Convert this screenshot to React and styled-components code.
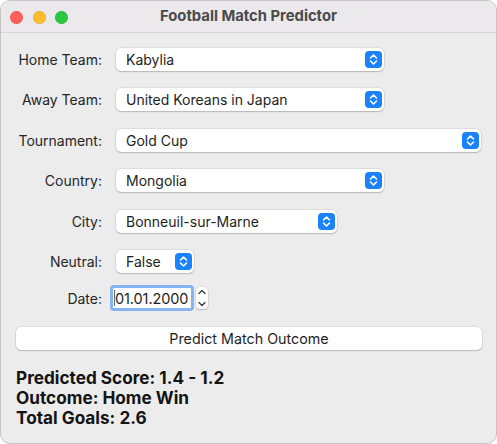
import React from "react";
import styled, { createGlobalStyle } from "styled-components";

const GlobalStyle = createGlobalStyle`
  html, body { margin: 0; padding: 0; background: #ffffff; }
  body { font-family: Inter, "Liberation Sans", "Noto Sans", sans-serif; -webkit-font-smoothing: antialiased; }
  * { box-sizing: border-box; }
`;

const Window = styled.div`
  width: 497px;
  height: 444px;
  border: 1px solid #c4c4c4;
  border-radius: 10px;
  overflow: hidden;
  background: #ececec;
  display: flex;
  flex-direction: column;
`;

const TitleBar = styled.div`
  height: 32px;
  flex: none;
  background: #ebe9eb;
  border-bottom: 1px solid #d6d6d6;
  display: grid;
  grid-template-columns: 1fr auto 1fr;
  align-items: center;
`;

const Lights = styled.div`
  display: flex;
  gap: 9.5px;
  padding-left: 9px;
  padding-top: 1px;
`;

const Light = styled.span`
  width: 13px;
  height: 13px;
  border-radius: 50%;
  background: ${(p) => p.$color};
  box-shadow: inset 0 0 0 0.5px rgba(0, 0, 0, 0.12);
`;

const Title = styled.div`
  font-size: 14.8px;
  font-weight: 700;
  color: #4a4a4a;
  margin-top: -2px;
`;

const Body = styled.div`
  padding: 15px 15px 0 14px;
  display: flex;
  flex-direction: column;
`;

const Form = styled.div`
  display: grid;
  grid-template-columns: 87px 1fr;
  column-gap: 14px;
  row-gap: 17.4px;
  align-items: center;
`;

const Label = styled.div`
  font-size: 14px;
  color: #262626;
  text-align: right;
  white-space: nowrap;
  margin-top: ${(p) => (p.$shift ? `${p.$shift}px` : "0")};
`;

const Popup = styled.div`
  height: 23px;
  width: ${(p) => (p.$width ? `${p.$width}px` : "100%")};
  background: #ffffff;
  border-radius: 5px;
  box-shadow: 0 0 0 0.5px rgba(0, 0, 0, 0.12), 0 1px 1.5px rgba(0, 0, 0, 0.18);
  display: flex;
  align-items: center;
  justify-content: space-between;
  padding: 0 2px 0 10px;
  font-size: 14px;
  color: #1e1e1e;
`;

const Indicator = styled.span`
  width: 17px;
  height: 17px;
  border-radius: 4px;
  background: #1a82fb;
  display: flex;
  align-items: center;
  justify-content: center;
`;

const DateWrap = styled.div`
  display: flex;
  align-items: center;
  gap: 2px;
  margin-left: -6px;
  margin-top: -5px;
`;

const DateField = styled.div`
  width: 84px;
  height: 26px;
  border: 3px solid #86b3f1;
  border-radius: 4px;
  background: #ffffff;
  display: flex;
  align-items: center;
  padding-left: 1px;
  font-size: 14.5px;
  letter-spacing: -0.1px;
  color: #1e1e1e;
  white-space: nowrap;
  overflow: hidden;
`;

const Caret = styled.span`
  flex: none;
  width: 1px;
  height: 16px;
  background: #6a6a6a;
`;

const Stepper = styled.div`
  width: 12px;
  height: 22px;
  background: #ffffff;
  border-radius: 4px;
  box-shadow: 0 0 0 0.5px rgba(0, 0, 0, 0.12), 0 1px 1.5px rgba(0, 0, 0, 0.18);
  display: flex;
  flex-direction: column;
  align-items: center;
  justify-content: space-between;
  padding: 2px 0;
`;

const Button = styled.div`
  margin-top: 16px;
  height: 23px;
  width: 466px;
  margin-left: 1px;
  background: #ffffff;
  border-radius: 5px;
  box-shadow: 0 0 0 0.5px rgba(0, 0, 0, 0.12), 0 1px 1.5px rgba(0, 0, 0, 0.18);
  display: flex;
  align-items: center;
  justify-content: center;
  font-size: 14.3px;
  color: #1e1e1e;
`;

const Results = styled.div`
  margin-top: 18px;
  padding-left: 1px;
  display: flex;
  flex-direction: column;
`;

const ResultLine = styled.div`
  font-size: 17.2px;
  font-weight: 700;
  line-height: 20px;
  color: #141414;
`;

const Chevrons = () => (
  <svg width="11" height="13" viewBox="0 0 11 13" fill="none">
    <path d="M2.5 5 L5.5 2 L8.5 5" stroke="#fff" strokeWidth="1.6" strokeLinecap="round" strokeLinejoin="round" />
    <path d="M2.5 8 L5.5 11 L8.5 8" stroke="#fff" strokeWidth="1.6" strokeLinecap="round" strokeLinejoin="round" />
  </svg>
);

const ChevUp = () => (
  <svg width="8" height="6" viewBox="0 0 8 6" fill="none">
    <path d="M1 4.5 L4 1.5 L7 4.5" stroke="#3a3a3a" strokeWidth="1.3" strokeLinecap="round" strokeLinejoin="round" />
  </svg>
);

const ChevDown = () => (
  <svg width="8" height="6" viewBox="0 0 8 6" fill="none">
    <path d="M1 1.5 L4 4.5 L7 1.5" stroke="#3a3a3a" strokeWidth="1.3" strokeLinecap="round" strokeLinejoin="round" />
  </svg>
);

const fields = [
  { label: "Home Team:", value: "Kabylia", width: 268 },
  { label: "Away Team:", value: "United Koreans in Japan", width: 268 },
  { label: "Tournament:", value: "Gold Cup" },
  { label: "Country:", value: "Mongolia", width: 268 },
  { label: "City:", value: "Bonneuil-sur-Marne", width: 221 },
  { label: "Neutral:", value: "False", width: 78 },
];

export default function App() {
  return (
    <>
      <GlobalStyle />
      <Window>
        <TitleBar>
          <Lights>
            <Light $color="#fe5f57" />
            <Light $color="#febc2e" />
            <Light $color="#28c840" />
          </Lights>
          <Title>Football Match Predictor</Title>
          <div />
        </TitleBar>
        <Body>
          <Form>
            {fields.map((f) => (
              <React.Fragment key={f.label}>
                <Label>{f.label}</Label>
                <Popup $width={f.width}>
                  <span>{f.value}</span>
                  <Indicator>
                    <Chevrons />
                  </Indicator>
                </Popup>
              </React.Fragment>
            ))}
            <Label $shift={-5}>Date:</Label>
            <DateWrap>
              <DateField>
                <Caret />
                <span>01.01.2000</span>
              </DateField>
              <Stepper>
                <ChevUp />
                <ChevDown />
              </Stepper>
            </DateWrap>
          </Form>
          <Button>Predict Match Outcome</Button>
          <Results>
            <ResultLine>Predicted Score: 1.4 - 1.2</ResultLine>
            <ResultLine>Outcome: Home Win</ResultLine>
            <ResultLine>Total Goals: 2.6</ResultLine>
          </Results>
        </Body>
      </Window>
    </>
  );
}
